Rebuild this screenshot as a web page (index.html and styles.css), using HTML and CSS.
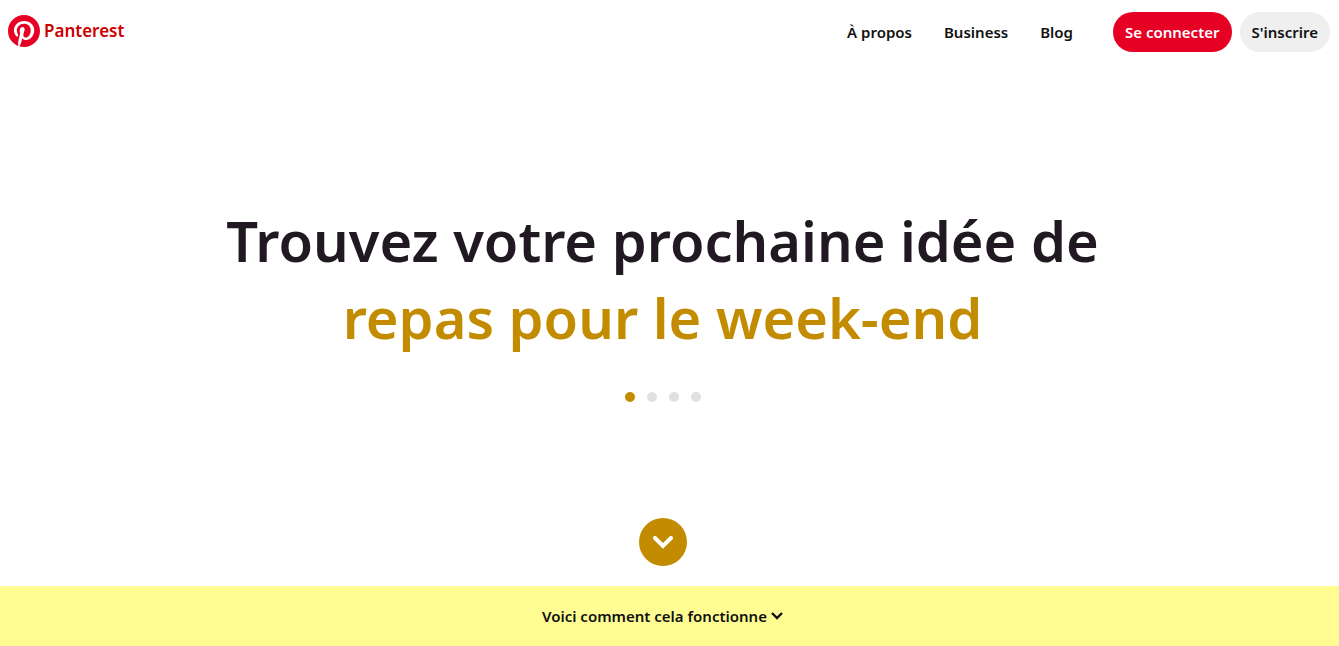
FILE: index.html
```html
<!DOCTYPE html>
<html lang="fr">
<head>
<meta charset="utf-8">
<meta name="viewport" content="width=device-width, initial-scale=1">
<title>Panterest</title>
<link rel="stylesheet" href="styles.css">
</head>
<body>
<header class="header">
  <a class="brand" href="#">
    <svg class="brand-logo" viewBox="0 0 24 24" aria-hidden="true"><circle cx="12" cy="12" r="11.5" fill="#fff"/><path fill="#e60023" d="M0 12c0 5.123 3.211 9.497 7.73 11.218-.11-.937-.227-2.482.025-3.566.217-.932 1.401-5.938 1.401-5.938s-.357-.715-.357-1.774c0-1.66.962-2.9 2.161-2.9 1.02 0 1.512.765 1.512 1.682 0 1.025-.653 2.557-.99 3.978-.281 1.189.597 2.159 1.769 2.159 2.123 0 3.756-2.239 3.756-5.471 0-2.861-2.056-4.86-4.991-4.86-3.398 0-5.393 2.549-5.393 5.184 0 1.027.395 2.127.889 2.726a.36.36 0 0 1 .083.343c-.091.378-.293 1.189-.332 1.355-.053.218-.173.265-.4.159-1.492-.694-2.424-2.875-2.424-4.627 0-3.769 2.737-7.229 7.892-7.229 4.144 0 7.365 2.953 7.365 6.899 0 4.117-2.595 7.431-6.199 7.431-1.211 0-2.348-.63-2.738-1.373 0 0-.599 2.282-.744 2.84-.282 1.084-1.064 2.456-1.549 3.235C9.584 23.815 10.77 24 12 24c6.627 0 12-5.373 12-12S18.627 0 12 0 0 5.373 0 12"/></svg>
    <span class="brand-name">Panterest</span>
  </a>
  <nav class="nav">
    <a class="nav-link" href="#">À propos</a>
    <a class="nav-link" href="#">Business</a>
    <a class="nav-link" href="#">Blog</a>
  </nav>
  <div class="actions">
    <button class="button button-primary" type="button">Se connecter</button>
    <button class="button button-secondary" type="button">S'inscrire</button>
  </div>
</header>
<main class="hero">
  <h1 class="title">Trouvez votre prochaine idée de <span class="title-topic">repas pour le week-end</span></h1>
  <div class="dots">
    <button class="dot dot-active" type="button" aria-label="Idée 1"></button>
    <button class="dot" type="button" aria-label="Idée 2"></button>
    <button class="dot" type="button" aria-label="Idée 3"></button>
    <button class="dot" type="button" aria-label="Idée 4"></button>
  </div>
  <button class="scroll-button" type="button" aria-label="Défiler vers le bas">
    <svg class="scroll-icon" viewBox="0 0 20 13" aria-hidden="true"><path d="M2 2l8 8 8-8" fill="none" stroke="currentColor" stroke-width="4" stroke-linecap="round"/></svg>
  </button>
</main>
<footer class="footer">
  <a class="footer-link" href="#">Voici comment cela fonctionne
    <svg class="footer-icon" viewBox="0 0 12 8" aria-hidden="true"><path d="M1 1l5 5 5-5" fill="none" stroke="currentColor" stroke-width="2.4"/></svg>
  </a>
</footer>
</body>
</html>
```
FILE: styles.css
```css
* { box-sizing: border-box; }
body {
  margin: 0;
  min-height: 100vh;
  display: flex;
  flex-direction: column;
  background: #fff;
  color: #111;
  font: 600 15px/24px "Noto Sans", "Open Sans", sans-serif;
}
a { color: inherit; text-decoration: none; }
button { border: 0; padding: 0; font: inherit; color: inherit; cursor: pointer; }
.header {
  display: flex;
  align-items: center;
  padding: 12px 9px 12px 8px;
}
.brand { display: flex; align-items: center; gap: 4px; padding-bottom: 2px; color: #cc0000; }
.brand-logo { width: 32px; height: 32px; }
.brand-name { font-size: 17px; }
.nav { display: flex; gap: 32px; margin-left: auto; margin-right: 40px; }
.actions { display: flex; gap: 8px; }
.button { height: 40px; padding: 0 12px; border-radius: 20px; }
.button-primary { background: #e60023; color: #fff; }
.button-secondary { background: #efefef; }
.hero {
  flex: 1;
  display: flex;
  flex-direction: column;
  align-items: center;
  padding: 138px 14px 20px 0;
}
.title {
  margin: 0;
  font-size: 56px;
  line-height: 77px;
  font-weight: 600;
  text-align: center;
  color: #211922;
}
.title-topic { display: block; color: #c28b00; }
.dots { display: flex; gap: 12px; margin-top: 36px; }
.dot { width: 10px; height: 10px; border-radius: 50%; background: #e0e0e0; }
.dot-active { background: #c28b00; }
.scroll-button {
  display: flex;
  align-items: center;
  justify-content: center;
  width: 48px;
  height: 48px;
  margin-top: auto;
  border-radius: 50%;
  background: #c28b00;
  color: #fff;
}
.scroll-icon { width: 20px; height: 13px; }
.footer {
  display: flex;
  justify-content: center;
  padding: 18px 14px 18px 0;
  background: #fffd92;
}
.footer-link { display: flex; align-items: center; gap: 4px; }
.footer-icon { width: 12px; height: 8px; }
```
